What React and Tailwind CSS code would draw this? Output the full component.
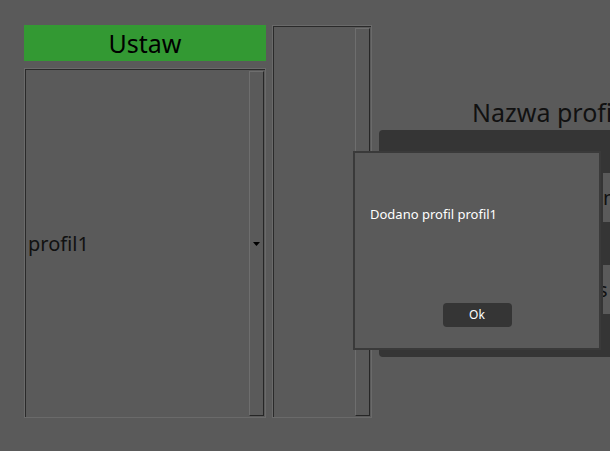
import React from 'react';

const font = { fontFamily: '"Noto Sans", "Open Sans", sans-serif' };

const Scrollbar = ({ children }) => (
  <div className="w-[15px] my-[1px] mr-[1px] border-l border-t border-[#6e6e6e] border-r border-b border-r-[#262626] border-b-[#262626] flex items-center justify-center">
    {children}
  </div>
);

const App = () => {
  return (
    <div
      className="relative w-[610px] h-[451px] bg-[#5a5a5a] overflow-hidden"
      style={font}
    >
      {/* main row */}
      <div className="flex items-start pt-[25px] pl-[24px]">
        {/* left column */}
        <div className="w-[242px] flex flex-col gap-[7px] shrink-0">
          <button className="h-[36px] bg-[#339933] text-black text-[25px] leading-none flex items-center justify-center">
            Ustaw
          </button>
          <div className="h-[350px] border border-[#6a6a6a] flex">
            <div className="flex-1 flex border-l border-t border-[#2a2a2a]">
              <div className="flex-1 flex items-center pl-[2px] text-[20px] text-[#111]">
                profil1
              </div>
              <Scrollbar>
                <svg width="7" height="4" viewBox="0 0 7 4">
                  <path d="M0 0h7L3.5 4z" fill="#000" />
                </svg>
              </Scrollbar>
            </div>
          </div>
        </div>

        {/* second list */}
        <div className="ml-[6px] w-[100px] h-[393px] border border-[#6a6a6a] flex shrink-0">
          <div className="flex-1 flex border-l border-t border-[#2a2a2a]">
            <div className="flex-1" />
            <Scrollbar />
          </div>
        </div>

        {/* right area */}
        <div className="ml-[7px] flex flex-col shrink-0 w-[400px]">
          <div className="h-[105px] flex items-end pb-[5px] pl-[93px] text-[25px] text-[#111] whitespace-nowrap leading-none">
            Nazwa profilu
          </div>
          <div className="h-[227px] bg-[#353535] rounded-[4px] flex flex-col pt-[43px] pl-[224px] gap-[43px]">
            <div className="h-[49px] bg-[#5a5a5a] flex items-center text-[20px] text-[#111] whitespace-nowrap overflow-hidden">
              nazwa
            </div>
            <div className="h-[49px] bg-[#5a5a5a] flex items-center text-[20px] text-[#111] whitespace-nowrap overflow-hidden">
              <span className="-ml-[5px]">s</span>
            </div>
          </div>
        </div>
      </div>

      {/* message dialog */}
      <div className="absolute left-[353px] top-[151px] w-[248px] h-[199px] bg-[#5a5a5a] border-2 border-[#3a3a3a] flex flex-col">
        <div className="pt-[55px] pl-[15px] text-[13px] text-white leading-none">
          Dodano profil profil1
        </div>
        <div className="mt-auto mb-[21px] flex justify-center">
          <button className="w-[69px] h-[24px] bg-[#353535] rounded-[4px] text-white text-[12px] flex items-center justify-center">
            Ok
          </button>
        </div>
      </div>
    </div>
  );
};

export default App;
